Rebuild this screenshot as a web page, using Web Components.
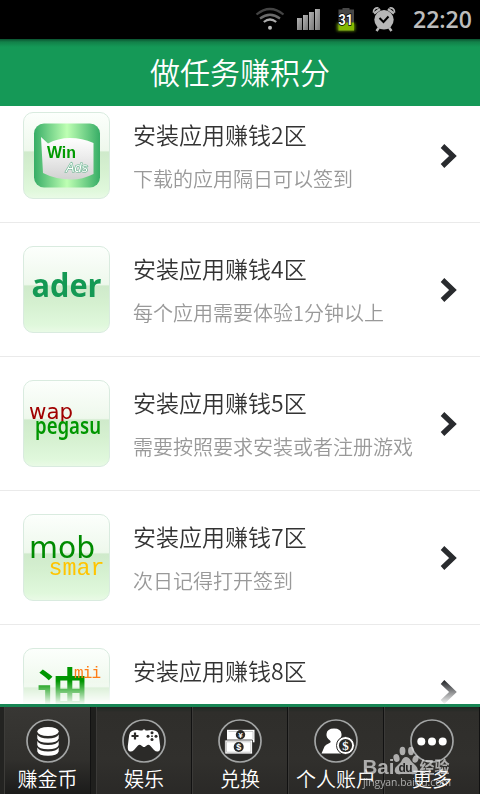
<!DOCTYPE html>
<html lang="zh-CN">
<head>
<meta charset="utf-8">
<title>做任务赚积分</title>
<style>
    body {
        margin: 0;
        background: #fff;
        font-family: "Noto Sans CJK SC", sans-serif;
    }
</style>
</head>
<body>
<task-app></task-app>

<script>
function define(name, html, setup) {
  const template = document.createElement('template');
  template.innerHTML = html;
  customElements.define(name, class extends HTMLElement {
    constructor() {
      super();
      this._shadowRoot = this.attachShadow({ mode: 'open' });
      this._shadowRoot.appendChild(template.content.cloneNode(true));
    }
    connectedCallback() {
      if (setup) setup(this, this._shadowRoot);
    }
  });
}

define('status-bar', `
    <style>
        :host {
            display: flex;
            align-items: center;
            justify-content: flex-end;
            height: 39px;
            background: #000;
            color: #bdbdbd;
        }
        svg {
            display: block;
            flex: none;
        }
        .time {
            width: 59px;
            margin: 0 8px 0 16px;
            font: 600 23px/39px "Open Sans", sans-serif;
            white-space: nowrap;
        }
    </style>
    <svg width="142" height="39" viewBox="256 0 142 39">
        <defs>
            <linearGradient id="bar" x1="0" y1="0" x2="1" y2="1"><stop offset="0" stop-color="#b5b5b5"/><stop offset="1" stop-color="#777"/></linearGradient>
            <filter id="glow" x="-40%" y="-60%" width="180%" height="220%"><feGaussianBlur stdDeviation="1.5"/></filter>
        </defs>
        <g fill="none" stroke-width="2.2">
            <path d="M257.5 14.5Q271 3.500 284.500 14.500" stroke="#444"/>
            <path d="M261 18.500Q271 11 281 18.500" stroke="#6a6a6a"/>
            <path d="M264.800 22Q271 17 277.200 22" stroke="#aaa"/>
        </g>
        <circle cx="271" cy="27.800" r="2" fill="#bbb"/>
        <g fill="url(#bar)">
            <path d="M298 18h5v12h-5z"/><path d="M304 15h5v15h-5z"/><path d="M310 12h5v18h-5z"/><path d="M316 9h5v21h-5z"/>
        </g>
        <path d="M338 23h18v8h-18z" fill="#8ed000" filter="url(#glow)" opacity=".7"/>
        <path d="M339.500 9.500h4V8h7v1.500h4.500v21h-15.500z" fill="#484848"/>
        <path d="M339.500 22.500h15.500v8h-15.500z" fill="#83b800"/>
        <text x="339.500" y="25" font-family="Roboto" font-weight="700" font-size="15" fill="#fff" textLength="14.500" lengthAdjust="spacingAndGlyphs" stroke="#000" stroke-width="1.500" paint-order="stroke">31</text>
        <g fill="#b7b7b7" stroke="#b7b7b7">
            <circle cx="385" cy="19.800" r="9.700" stroke="none"/>
            <path d="M375 13.500l6-4.500M395 13.500l-6-4.500M380 27.500l-2.500 3.500M390 27.500l2.500 3.500" stroke-width="2.500"/>
            <path d="M374.500 12.500a4 4 0 0 1 5-4.500M395.500 12.500a4 4 0 0 0-5-4.500" fill="none" stroke-width="1.800"/>
        </g>
        <path d="M380.500 18l4 4 5-5.500" fill="none" stroke="#000" stroke-width="2"/>
    </svg>
    <div class="time">22:20</div>
`);

define('title-bar', `
    <style>
        :host {
            display: block;
            height: 67px;
            background: linear-gradient(#0b5331 0, #128149 3px, #159957 8px);
            color: #fff;
            font-size: 30px;
            font-weight: 350;
            line-height: 64px;
            text-align: center;
        }
    </style>
    <slot></slot>
`);

define('app-icon', `
    <style>
        :host {
            display: block;
            box-sizing: border-box;
            width: 87px;
            height: 87px;
            border: 1px solid #d9ebdf;
            border-radius: 10px;
            background: linear-gradient(#fcfffc 0, #eef8ec 44%, #cfeacb 46%, #d5f0d0 66%, #e0f8dc 92%, #e9fae6 100%);
        }
        ::slotted(svg) {
            display: block;
            width: 85px;
            height: 85px;
            overflow: visible;
        }
    </style>
    <slot></slot>
`);

define('task-row', `
    <style>
        :host {
            display: flex;
            box-sizing: border-box;
            height: 134px;
            padding: 23px 23px 0;
            border-bottom: 1px solid #eaeaea;
        }
        .text {
            flex: 1;
            margin-left: 23px;
            white-space: nowrap;
        }
        .name {
            height: 45px;
            color: #333;
            font-size: 23px;
            font-weight: 350;
            line-height: 44px;
        }
        .hint {
            height: 44px;
            color: #999;
            font-size: 20px;
            font-weight: 350;
            line-height: 44px;
        }
        .arrow {
            flex: none;
            width: 17px;
            height: 26px;
            margin-top: 31px;
        }
    </style>
    <app-icon><slot></slot></app-icon>
    <div class="text">
        <div class="name"></div>
        <div class="hint"></div>
    </div>
    <svg class="arrow" viewBox="0 0 17 26"><path d="M2.500 3l10.500 10-10.500 10" fill="none" stroke="#292b2e" stroke-width="5.200"/></svg>
`, (el, root) => {
  root.querySelector('.name').textContent = el.getAttribute('name');
  root.querySelector('.hint').textContent = el.getAttribute('hint') || '';
});

define('tab-item', `
    <style>
        :host {
            display: block;
            box-sizing: border-box;
            height: 87px;
            padding-top: 12px;
            border-left: 1px solid #3b3a38;
            border-right: 1px solid #111;
            color: #fff;
            text-align: center;
        }
        :host([active]) {
            border-left: 4px solid #232321;
            border-right: 5px solid #1f1f1d;
            background: linear-gradient(#383734, #31302d 60%, #1b1b1a);
            box-shadow: inset 1px 0 #3d3c39, inset -1px 0 #111;
        }
        .ring {
            display: block;
            width: 44px;
            height: 44px;
            margin: 0 auto;
        }
        .label {
            margin: 0 -8px;
            font-size: 20px;
            font-weight: 350;
            line-height: 31px;
            white-space: nowrap;
        }
    </style>
    <div class="ring"><slot name="icon"></slot></div>
    <div class="label"><slot></slot></div>
`);

define('tab-bar', `
    <style>
        :host {
            display: grid;
            grid-template-columns: repeat(5, 96px);
            border-top: 3px solid #178654;
            background: linear-gradient(#1d2721 0, #2f2e2b 5px, #31302d 60%, #2a2927);
        }
        svg {
            display: block;
        }
        .ring {
            fill: #2b2a28;
            stroke: #a3a5a5;
            stroke-width: 1.7;
        }
    </style>
    <tab-item active>
        <svg slot="icon" width="44" height="44" viewBox="0 0 44 44">
            <circle class="ring" cx="22" cy="22" r="21"/>
            <g fill="#fff">
                <ellipse cx="22" cy="12.500" rx="10.700" ry="4.500"/>
                <path id="coin" d="M11.300 15.500q2 4 10.700 4t10.700-4v4q-1.500 4.300-10.700 4.300t-10.700-4.300z"/>
                <use href="#coin" y="6.500"/>
                <use href="#coin" y="13"/>
            </g>
        </svg>赚金币
    </tab-item>
    <tab-item>
        <svg slot="icon" width="44" height="44" viewBox="0 0 44 44">
            <circle class="ring" cx="22" cy="22" r="21"/>
            <path fill="#fff" d="M10 12q4-1.500 8.500-.5h2l.5-1h2l.5 1h2q4.500-1 8.500.5 2 .5 2.800 4l1.400 11q.4 5-2.200 5.500-2 .4-4-1.500l-3.500-4q-2-2-3.800-.5l-2 1.600h-1.400l-2-1.600q-1.800-1.500-3.800.5l-3.500 4q-2 1.900-4 1.500-2.600-.5-2.200-5.500l1.400-11q.8-3.500 2.800-4z"/>
            <path d="M9.500 17h7M13 13.500v7" stroke="#2b2a28" stroke-width="2.200"/>
            <g fill="#2b2a28"><circle cx="30" cy="13.800" r="1.500"/><circle cx="30" cy="20.500" r="1.500"/><circle cx="26" cy="17.200" r="1.500"/><circle cx="34" cy="17.200" r="1.500"/><circle cx="30" cy="17.200" r=".9"/></g>
        </svg>娱乐
    </tab-item>
    <tab-item>
        <svg slot="icon" width="44" height="44" viewBox="0 0 44 44">
            <circle class="ring" cx="22" cy="22" r="21"/>
            <path fill="#fff" d="M9 10.800h27.500v12.500h-27.500z"/>
            <path fill="#fff" stroke="#2b2a28" stroke-width=".8" d="M6.800 21h27.700v14h-27.700z"/>
            <path fill="none" stroke="#aaa" stroke-width=".6" d="M10.500 12.500h24.500v7.500M8.500 22.800h24.300v10.400h-24.300z"/>
            <circle cx="22.500" cy="15.800" r="4.700" fill="#2b2a28"/><circle cx="20.700" cy="28" r="5" fill="#2b2a28"/>
            <g fill="#fff" font-family="Liberation Sans" font-weight="700" text-anchor="middle"><text x="22.500" y="18.600" font-size="8">¥</text><text x="20.700" y="31.200" font-size="9">$</text></g>
        </svg>兑换
    </tab-item>
    <tab-item>
        <svg slot="icon" width="44" height="44" viewBox="0 0 44 44">
            <circle class="ring" cx="22" cy="22" r="21"/>
            <path fill="#fff" d="M7.500 34.500l3-7q1-2 5-3.500 2-1 .5-2.500-4-3-3.500-6.500.5-5.500 7.500-5.500t7.500 5.500q.5 3.500-3.500 6.500-1.500 1.500.5 2.500l3 2v8.500z"/>
            <circle cx="31.500" cy="26.500" r="9" fill="#fff" stroke="#2b2a28"/>
            <circle cx="31.500" cy="26.500" r="6.600" fill="#2b2a28"/>
            <text x="31.500" y="30.700" fill="#fff" font-family="Liberation Serif" font-weight="700" font-size="13" text-anchor="middle">$</text>
        </svg>个人账户
    </tab-item>
    <tab-item>
        <svg slot="icon" width="44" height="44" viewBox="0 0 44 44">
            <circle class="ring" cx="22" cy="22" r="21"/>
            <g fill="#fff"><circle cx="11.300" cy="22.500" r="4"/><circle cx="22" cy="22.500" r="4"/><circle cx="32.700" cy="22.500" r="4"/></g>
        </svg>更多
    </tab-item>
`);

define('water-mark', `
    <style>
        :host {
            display: block;
            opacity: .72;
        }
        svg {
            display: block;
        }
    </style>
    <svg width="100" height="48" viewBox="360 744 100 48" fill="#dedede">
        <text x="362.500" y="773.500" font-family="Liberation Sans" font-weight="700" font-size="20" textLength="32" lengthAdjust="spacingAndGlyphs">Bai</text>
        <ellipse cx="396.500" cy="758" rx="3" ry="4" transform="rotate(-15 396.500 758)"/>
        <ellipse cx="402.500" cy="751" rx="2.900" ry="4.200"/>
        <ellipse cx="411" cy="751" rx="2.900" ry="4.200"/>
        <ellipse cx="415.500" cy="759" rx="2.900" ry="3.800" transform="rotate(20 415.500 759)"/>
        <path d="M406 757q3 0 5 4l5 5q3 3 1 7-2 2-6 1h-10q-5 1-6-2-1-4 2-6l4-4q2-5 5-5z"/>
        <text x="398.500" y="772" font-family="Liberation Sans" font-size="12" font-weight="700" fill="#222" textLength="14">du</text>
        <text x="419.500" y="772.500" font-family="Noto Sans CJK SC" font-weight="700" font-size="16" textLength="30" lengthAdjust="spacingAndGlyphs">经验</text>
        <text x="363" y="786" font-family="Open Sans" font-size="10.500" textLength="88" lengthAdjust="spacingAndGlyphs">jingyan.baidu.com</text>
    </svg>
`);

define('task-app', `
    <style>
        :host {
            display: flex;
            flex-direction: column;
            position: relative;
            width: 480px;
            height: 800px;
            background: #fff;
            overflow: hidden;
        }
        .list {
            flex: none;
            height: 598px;
            overflow: hidden;
            -webkit-mask-image: linear-gradient(#000 575px, transparent 599px);
            mask-image: linear-gradient(#000 575px, transparent 599px);
        }
        /* the list is scrolled a little under the title bar */
        .rows {
            margin-top: -17px;
        }
        water-mark {
            position: absolute;
            left: 360px;
            top: 744px;
        }
    </style>
    <status-bar></status-bar>
    <title-bar>做任务赚积分</title-bar>
    <div class="list">
        <div class="rows">
            <task-row name="安装应用赚钱2区" hint="下载的应用隔日可以签到">
                <svg viewBox="0 0 85 85">
                    <defs>
                        <linearGradient id="win"><stop offset="0" stop-color="#37ad66"/><stop offset=".5" stop-color="#beffb3"/><stop offset="1" stop-color="#37ad66"/></linearGradient>
                        <linearGradient id="flag" x1="0" y1="0" x2="0" y2="1"><stop offset="0" stop-color="#fff"/><stop offset=".45" stop-color="#ededed"/><stop offset="1" stop-color="#d2d2d2"/></linearGradient>
                    </defs>
                    <rect x="10" y="10.500" width="66" height="64" rx="10" fill="url(#win)"/>
                    <path d="M17 24l7 6.500q10-5.500 22-5.500t23.500 5v31q-11 5.500-22 5.500-16 0-28.500-6.500z" fill="url(#flag)"/>
                    <text x="23" y="45" font-family="Liberation Sans" font-weight="700" font-size="16.500" fill="#009a00" textLength="29" lengthAdjust="spacingAndGlyphs">Win</text>
                    <text x="42" y="58.500" font-family="Liberation Sans" font-style="italic" font-size="12.500" fill="#fff" stroke="#64b58d" stroke-width="1.200" paint-order="stroke" textLength="22" lengthAdjust="spacingAndGlyphs">Ads</text>
                </svg>
            </task-row>
            <task-row name="安装应用赚钱4区" hint="每个应用需要体验1分钟以上">
                <svg viewBox="0 0 85 85"><text x="7.500" y="49.500" font-family="Open Sans" font-weight="700" font-size="32" fill="#149954" textLength="70" lengthAdjust="spacingAndGlyphs">ader</text></svg>
            </task-row>
            <task-row name="安装应用赚钱5区" hint="需要按照要求安装或者注册游戏">
                <svg viewBox="0 0 85 85">
                    <text x="5" y="37.500" font-family="DejaVu Sans" font-size="22" fill="#a00000" textLength="44" lengthAdjust="spacingAndGlyphs">wap</text>
                    <text x="11" y="52.500" font-family="Noto Sans" font-weight="600" font-size="23" fill="#009600" textLength="66" lengthAdjust="spacingAndGlyphs">pegasu</text>
                </svg>
            </task-row>
            <task-row name="安装应用赚钱7区" hint="次日记得打开签到">
                <svg viewBox="0 0 85 85">
                    <text x="5" y="42.500" font-family="DejaVu Sans" font-size="31" fill="#008b00" textLength="66" lengthAdjust="spacingAndGlyphs">mob</text>
                    <text x="24.500" y="59.500" font-family="Liberation Mono" font-size="24" fill="#ffc400" textLength="56" lengthAdjust="spacingAndGlyphs">smar</text>
                </svg>
            </task-row>
            <task-row name="安装应用赚钱8区">
                <svg viewBox="0 0 85 85">
                    <text x="12" y="64" font-family="Noto Sans CJK SC" font-weight="500" font-size="54" fill="#009600">迪</text>
                    <text x="50" y="28.500" font-family="Liberation Mono" font-size="16" fill="#ff7d16" textLength="27">mii</text>
                </svg>
            </task-row>
        </div>
    </div>
    <tab-bar></tab-bar>
    <water-mark></water-mark>
`);
</script>
</body>
</html>
